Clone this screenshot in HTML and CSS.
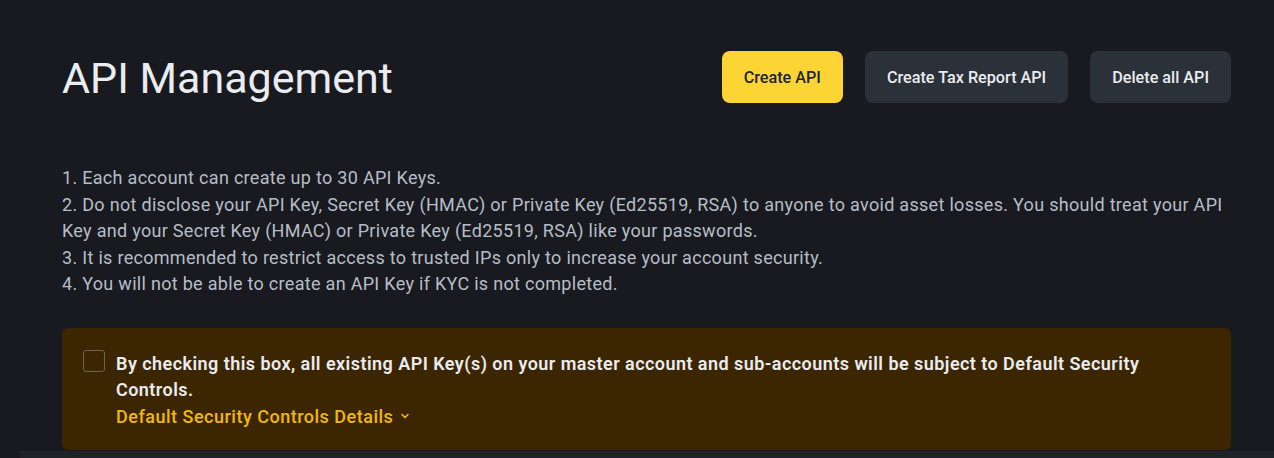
FILE: index.html
```html
<!DOCTYPE html>
<html lang="en">
<head>
<meta charset="utf-8">
<title>API Management</title>
<link rel="stylesheet" href="styles.css">
</head>
<body>
<main class="page">
  <header class="header">
    <h1 class="title">API Management</h1>
    <div class="actions">
      <button class="btn btn-primary">Create API</button>
      <button class="btn btn-secondary">Create Tax Report API</button>
      <button class="btn btn-secondary">Delete all API</button>
    </div>
  </header>
  <div class="notes">
    <p>1. Each account can create up to 30 API Keys.</p>
    <p>2. Do not disclose your API Key, Secret Key (HMAC) or Private Key (Ed25519, RSA) to anyone to avoid asset losses. You should treat your API Key and your Secret Key (HMAC) or Private Key (Ed25519, RSA) like your passwords.</p>
    <p>3. It is recommended to restrict access to trusted IPs only to increase your account security.</p>
    <p>4. You will not be able to create an API Key if KYC is not completed.</p>
  </div>
  <section class="notice">
    <span class="checkbox"></span>
    <div class="notice-body">
      <p class="notice-text">By checking this box, all existing API Key(s) on your master account and sub-accounts will be subject to Default Security Controls.</p>
      <a class="notice-link" href="#">Default Security Controls Details <svg class="chev" width="10" height="10" viewBox="0 0 10 10"><path d="M2 3.5 L5 6.5 L8 3.5" fill="none" stroke="currentColor" stroke-width="1.6" stroke-linecap="round" stroke-linejoin="round"/></svg></a>
    </div>
  </section>
</main>
<div class="next-card"></div>
</body>
</html>
```
FILE: styles.css
```css
* { box-sizing: border-box; }
html, body { margin: 0; padding: 0; }
body {
  background: #181a20;
  font-family: Roboto, "Noto Sans", sans-serif;
  color: #eaecef;
  height: 458px;
  overflow: hidden;
}
.page {
  padding: 51px 43px 0 62px;
}
.header {
  display: flex;
  align-items: center;
  justify-content: space-between;
  height: 52px;
}
.title {
  margin: 0;
  padding-top: 2px;
  font-size: 43px;
  font-weight: 400;
  color: #eaecef;
  letter-spacing: 0;
  line-height: 52px;
}
.actions {
  display: flex;
  gap: 22px;
}
.btn {
  height: 52px;
  padding: 0 22px;
  border: none;
  border-radius: 8px;
  font-family: inherit;
  font-size: 16.2px;
  font-weight: 500;
  cursor: pointer;
}
.btn-primary { background: #fcd535; color: #202630; }
.btn-secondary { background: #2b3139; color: #eaecef; }
.notes {
  margin-top: 62px;
  color: #b7bdc6;
  font-size: 18px;
  letter-spacing: 0.3px;
  line-height: 26.5px;
}
.notes p { margin: 0; }
.notice {
  margin-top: 30px;
  background: #3c2601;
  border-radius: 6px;
  display: flex;
  align-items: flex-start;
  gap: 11px;
  padding: 22px 21px 20px 21px;
  min-height: 122px;
}
.checkbox {
  flex: none;
  width: 22px;
  height: 22px;
  border: 1.5px solid #6b6255;
  border-radius: 3px;
}
.notice-body {
  margin-top: 1px;
  font-size: 18px;
  letter-spacing: 0.45px;
  line-height: 26.5px;
}
.notice-text {
  margin: 0;
  font-weight: 600;
  color: #eaecef;
}
.notice-link {
  color: #f0b90b;
  font-weight: 500;
  letter-spacing: 0.5px;
  text-decoration: none;
}
.chev { vertical-align: 2px; margin-left: 2px; }
.next-card {
  margin: 1px 0 0 20px;
  height: 20px;
  background: #1e2329;
}
```
